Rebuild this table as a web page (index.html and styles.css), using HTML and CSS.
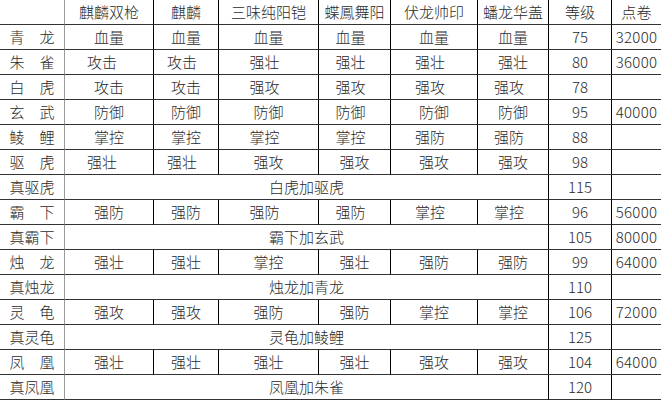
FILE: index.html
```html
<!DOCTYPE html>
<html lang="zh-CN">
<head>
<meta charset="utf-8">
<title>神兽坐骑表</title>
<link rel="stylesheet" href="styles.css">
</head>
<body>
<table class="grid">
  <colgroup>
    <col class="c0"><col class="c1"><col class="c2"><col class="c3"><col class="c4"><col class="c5"><col class="c6"><col class="c7"><col class="c8">
  </colgroup>
  <tr class="head">
    <td class="name"></td><td>麒麟双枪</td><td>麒麟</td><td>三味纯阳铠</td><td>蝶鳳舞阳</td><td>伏龙帅印</td><td>蟠龙华盖</td><td>等级</td><td class="last">点卷</td>
  </tr>
  <tr>
    <td class="name">青　龙</td><td>血量</td><td>血量</td><td>血量</td><td class="s">血量</td><td>血量</td><td>血量</td><td>75</td><td class="last">32000</td>
  </tr>
  <tr>
    <td class="name">朱　雀</td><td class="s2">攻击</td><td class="s">攻击</td><td class="s">强壮</td><td class="s">强壮</td><td class="s">强壮</td><td>强壮</td><td>80</td><td class="last">36000</td>
  </tr>
  <tr>
    <td class="name">白　虎</td><td>攻击</td><td>攻击</td><td class="s">强攻</td><td class="s">强攻</td><td class="s">强攻</td><td class="s">强攻</td><td>78</td><td class="last"></td>
  </tr>
  <tr>
    <td class="name">玄　武</td><td>防御</td><td>防御</td><td>防御</td><td class="s">防御</td><td>防御</td><td>防御</td><td>95</td><td class="last">40000</td>
  </tr>
  <tr>
    <td class="name">鲮　鲤</td><td>掌控</td><td>掌控</td><td class="s">掌控</td><td class="s">掌控</td><td class="s">强防</td><td class="s">强防</td><td>88</td><td class="last"></td>
  </tr>
  <tr>
    <td class="name">驱　虎</td><td class="s2">强壮</td><td class="s">强壮</td><td>强攻</td><td>强攻</td><td>强攻</td><td>强攻</td><td>98</td><td class="last"></td>
  </tr>
  <tr>
    <td class="name">真驱虎</td><td colspan="6">白虎加驱虎</td><td>115</td><td class="last"></td>
  </tr>
  <tr>
    <td class="name">霸　下</td><td>强防</td><td>强防</td><td class="s">强防</td><td class="s">强防</td><td class="s">掌控</td><td class="s">掌控</td><td>96</td><td class="last">56000</td>
  </tr>
  <tr>
    <td class="name">真霸下</td><td colspan="6">霸下加玄武</td><td>105</td><td class="last">80000</td>
  </tr>
  <tr>
    <td class="name">烛　龙</td><td>强壮</td><td>强壮</td><td>掌控</td><td>强壮</td><td>强防</td><td>强防</td><td>99</td><td class="last">64000</td>
  </tr>
  <tr>
    <td class="name">真烛龙</td><td colspan="6">烛龙加青龙</td><td>110</td><td class="last"></td>
  </tr>
  <tr>
    <td class="name">灵　龟</td><td>强攻</td><td>强攻</td><td>强防</td><td>强防</td><td>掌控</td><td>掌控</td><td>106</td><td class="last">72000</td>
  </tr>
  <tr>
    <td class="name">真灵龟</td><td colspan="6">灵龟加鲮鲤</td><td>125</td><td class="last"></td>
  </tr>
  <tr>
    <td class="name">凤　凰</td><td>强壮</td><td>强壮</td><td>强壮</td><td>强壮</td><td>强攻</td><td>强攻</td><td>104</td><td class="last">64000</td>
  </tr>
  <tr>
    <td class="name">真凤凰</td><td colspan="6">凤凰加朱雀</td><td>120</td><td class="last"></td>
  </tr>
</table>
</body>
</html>
```
FILE: styles.css
```css
html, body {
  margin: 0;
  padding: 0;
  background: #ffffff;
}

body {
  width: 661px;
  height: 400px;
  overflow: hidden;
}

.grid {
  border-collapse: separate;
  border-spacing: 0;
  table-layout: fixed;
  width: 661px;
  font-family: "Noto Sans CJK SC", "Noto Sans", sans-serif;
  font-weight: 300;
  font-size: 15px;
  color: #2a2a2a;
}

.c0 { width: 65px; }
.c1 { width: 89px; }
.c2 { width: 65px; }
.c3 { width: 100px; }
.c4 { width: 72px; }
.c5 { width: 87px; }
.c6 { width: 71px; }
.c7 { width: 63px; }
.c8 { width: 49px; }

.grid tr {
  height: 25px;
}

.grid td {
  padding: 0;
  height: 24px;
  line-height: 24px;
  text-align: center;
  vertical-align: middle;
  white-space: nowrap;
  overflow: hidden;
  border-right: 1px solid #000000;
  border-bottom: 1px solid #333333;
}

.grid td.name {
  border-right: 1px solid #9a9a9a;
}

.grid td.last {
  border-right: none;
  letter-spacing: 0.3px;
}

.grid td.s {
  padding-right: 8px;
}

.grid td.s2 {
  padding-right: 14px;
}
```
